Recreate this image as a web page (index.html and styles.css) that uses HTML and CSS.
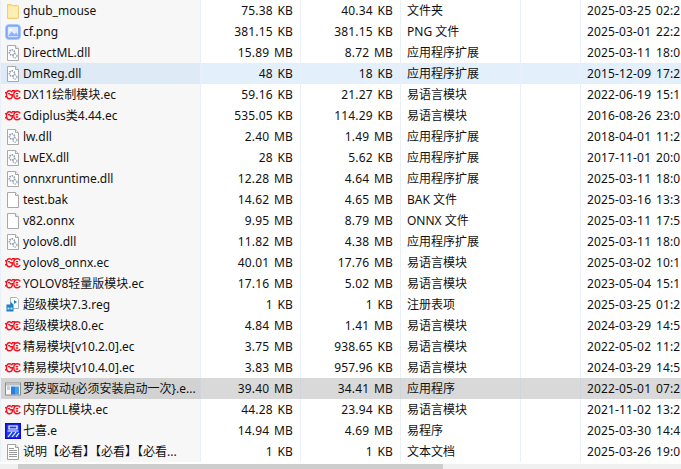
FILE: index.html
```html
<!DOCTYPE html>
<html lang="zh-CN">
<head>
<meta charset="utf-8">
<title>Files</title>
<link rel="stylesheet" href="styles.css">
</head>
<body>
<svg class="defs" width="0" height="0" aria-hidden="true">
  <symbol id="i-folder" viewBox="0 0 16 16"><path d="M2.500 1.500h4l1 1h5a1 1 0 0 1 1 1v11a1 1 0 0 1-1 1h-10z" fill="#fce596" stroke="#efcf74"/><path d="M3.500 4h9v10h-9z" fill="#fdeeb6"/></symbol>
  <symbol id="i-png" viewBox="0 0 17 17"><rect x="0.500" y="0.500" width="16" height="16" rx="4" fill="#7fa9f7" stroke="#aac8fa"/><rect x="3" y="3" width="11" height="11" rx="1" fill="#e2ecfe"/><path d="M3 13l4-5 3 3 2-2 2 3v1H3z" fill="#8db3f8"/><circle cx="6" cy="6" r="1.300" fill="#fff"/></symbol>
  <symbol id="i-dll" viewBox="0 0 16 16"><path d="M2.500 .5h8l3 3v12h-11z" fill="#fff" stroke="#a8a8a8"/><path d="M10.500 .5v3h3" fill="#eee" stroke="#a8a8a8"/><circle cx="7" cy="7.500" r="2.600" fill="none" stroke="#8e9aa6" stroke-width="1.600" stroke-dasharray="1.500 .8"/><circle cx="10" cy="11" r="2" fill="none" stroke="#9fb0c2" stroke-width="1.400" stroke-dasharray="1.300 .7"/></symbol>
  <symbol id="i-ec" viewBox="0 0 16 10"><g fill="none" stroke="#f2101c" stroke-width="1.400"><path d="M7.300 2.300C6.600 1.300 5.500.8 4.200.8 2.600.8 1.500 2.500 1.500 4.800S2.600 8.800 4.200 8.800c1.500 0 2.800-.9 3.100-2.400V4.700H4.500"/><path d="M15.300 2.300C14.600 1.300 13.500.8 12.200.8c-1.900 0-3.400 1.700-3.400 4s1.500 4 3.400 4c1.300 0 2.400-.6 3.100-1.600"/><path d="M3 3.600h2.200M10.800 3.600h2.400M10.800 6h2.400M0 2.500l2 1M0 7l2-1M7 .8h3"/></g></symbol>
  <symbol id="i-blank" viewBox="0 0 16 16"><path d="M2.500 .5h8l3 3v12h-11z" fill="#fff" stroke="#a8a8a8"/><path d="M10.500 .5v3h3" fill="#f0f0f0" stroke="#a8a8a8"/></symbol>
  <symbol id="i-reg" viewBox="0 0 16 16"><path d="M5.500 .5h6l2 2v9h-8z" fill="#fff" stroke="#a8b4c0"/><path d="M1.500 7.500h4v-3l3 3v7h-7z" fill="#1f7fc4"/><rect x="2.500" y="10.500" width="2" height="2" fill="#bfe2f8"/><rect x="5.500" y="10.500" width="2" height="2" fill="#bfe2f8"/><path d="M9 3l3 2-3 2z" fill="#1f7fc4"/></symbol>
  <symbol id="i-exe" viewBox="0 0 16 13"><rect x=".5" y=".5" width="15" height="12" fill="#f8f8f8" stroke="#8c8c8c"/><rect x="1" y="1" width="14" height="2" fill="#b9c0c8"/><rect x="6" y="4" width="4" height="8" fill="#2c7fd8"/><rect x="10" y="4" width="4" height="8" fill="#4aa0ec"/><rect x="2" y="4" width="3" height="1" fill="#9aa4ae"/><rect x="2" y="6" width="3" height="1" fill="#9aa4ae"/></symbol>
  <symbol id="i-e" viewBox="0 0 16 16"><rect x=".75" y=".75" width="14.500" height="14.500" fill="#1d3df0" stroke="#0b0bd8" stroke-width="1.500"/><path d="M4 3h8v3H4zM2.500 8h11M3 14l4-5M7 14l4-5M11 14l3-4" fill="none" stroke="#fff" stroke-width="1.200"/></symbol>
  <symbol id="i-txt" viewBox="0 0 16 16"><path d="M2.500 .5h8l3 3v12h-11z" fill="#fff" stroke="#a0a0a0"/><path d="M10.500 .5v3h3" fill="#eee" stroke="#a0a0a0"/><path d="M4 4.500h5M4 6.500h8M4 8.500h8M4 10.500h8M4 12.500h8" stroke="#9a9a9a"/></symbol>
</svg>
<main class="list">
  <div class="row"><div class="c name"><svg class="ico"><use href="#i-folder"/></svg><span>ghub_mouse</span></div><div class="c num">75.38 KB</div><div class="c num">40.34 KB</div><div class="c type">文件夹</div><div class="c gap"></div><div class="c date">2025-03-25 02:2</div></div>
  <div class="row"><div class="c name"><svg class="ico"><use href="#i-png"/></svg><span>cf.png</span></div><div class="c num">381.15 KB</div><div class="c num">381.15 KB</div><div class="c type">PNG 文件</div><div class="c gap"></div><div class="c date">2025-03-01 22:2</div></div>
  <div class="row"><div class="c name"><svg class="ico"><use href="#i-dll"/></svg><span>DirectML.dll</span></div><div class="c num">15.89 MB</div><div class="c num">8.72 MB</div><div class="c type">应用程序扩展</div><div class="c gap"></div><div class="c date">2025-03-11 18:0</div></div>
  <div class="row hover"><div class="c name"><svg class="ico"><use href="#i-dll"/></svg><span>DmReg.dll</span></div><div class="c num">48 KB</div><div class="c num">18 KB</div><div class="c type">应用程序扩展</div><div class="c gap"></div><div class="c date">2015-12-09 17:2</div></div>
  <div class="row"><div class="c name"><svg class="ico"><use href="#i-ec"/></svg><span>DX11绘制模块.ec</span></div><div class="c num">59.16 KB</div><div class="c num">21.27 KB</div><div class="c type">易语言模块</div><div class="c gap"></div><div class="c date">2022-06-19 15:1</div></div>
  <div class="row"><div class="c name"><svg class="ico"><use href="#i-ec"/></svg><span>Gdiplus类4.44.ec</span></div><div class="c num">535.05 KB</div><div class="c num">114.29 KB</div><div class="c type">易语言模块</div><div class="c gap"></div><div class="c date">2016-08-26 23:0</div></div>
  <div class="row"><div class="c name"><svg class="ico"><use href="#i-dll"/></svg><span>lw.dll</span></div><div class="c num">2.40 MB</div><div class="c num">1.49 MB</div><div class="c type">应用程序扩展</div><div class="c gap"></div><div class="c date">2018-04-01 11:2</div></div>
  <div class="row"><div class="c name"><svg class="ico"><use href="#i-dll"/></svg><span>LwEX.dll</span></div><div class="c num">28 KB</div><div class="c num">5.62 KB</div><div class="c type">应用程序扩展</div><div class="c gap"></div><div class="c date">2017-11-01 20:0</div></div>
  <div class="row"><div class="c name"><svg class="ico"><use href="#i-dll"/></svg><span>onnxruntime.dll</span></div><div class="c num">12.28 MB</div><div class="c num">4.64 MB</div><div class="c type">应用程序扩展</div><div class="c gap"></div><div class="c date">2025-03-11 18:0</div></div>
  <div class="row"><div class="c name"><svg class="ico"><use href="#i-blank"/></svg><span>test.bak</span></div><div class="c num">14.62 MB</div><div class="c num">4.65 MB</div><div class="c type">BAK 文件</div><div class="c gap"></div><div class="c date">2025-03-16 13:3</div></div>
  <div class="row"><div class="c name"><svg class="ico"><use href="#i-blank"/></svg><span>v82.onnx</span></div><div class="c num">9.95 MB</div><div class="c num">8.79 MB</div><div class="c type">ONNX 文件</div><div class="c gap"></div><div class="c date">2025-03-11 17:5</div></div>
  <div class="row"><div class="c name"><svg class="ico"><use href="#i-dll"/></svg><span>yolov8.dll</span></div><div class="c num">11.82 MB</div><div class="c num">4.38 MB</div><div class="c type">应用程序扩展</div><div class="c gap"></div><div class="c date">2025-03-11 18:0</div></div>
  <div class="row"><div class="c name"><svg class="ico"><use href="#i-ec"/></svg><span>yolov8_onnx.ec</span></div><div class="c num">40.01 MB</div><div class="c num">17.76 MB</div><div class="c type">易语言模块</div><div class="c gap"></div><div class="c date">2025-03-02 10:1</div></div>
  <div class="row"><div class="c name"><svg class="ico"><use href="#i-ec"/></svg><span>YOLOV8轻量版模块.ec</span></div><div class="c num">17.16 MB</div><div class="c num">5.02 MB</div><div class="c type">易语言模块</div><div class="c gap"></div><div class="c date">2023-05-04 15:1</div></div>
  <div class="row"><div class="c name"><svg class="ico"><use href="#i-reg"/></svg><span>超级模块7.3.reg</span></div><div class="c num">1 KB</div><div class="c num">1 KB</div><div class="c type">注册表项</div><div class="c gap"></div><div class="c date">2025-03-25 01:2</div></div>
  <div class="row"><div class="c name"><svg class="ico"><use href="#i-ec"/></svg><span>超级模块8.0.ec</span></div><div class="c num">4.84 MB</div><div class="c num">1.41 MB</div><div class="c type">易语言模块</div><div class="c gap"></div><div class="c date">2024-03-29 14:5</div></div>
  <div class="row"><div class="c name"><svg class="ico"><use href="#i-ec"/></svg><span>精易模块[v10.2.0].ec</span></div><div class="c num">3.75 MB</div><div class="c num">938.65 KB</div><div class="c type">易语言模块</div><div class="c gap"></div><div class="c date">2022-05-02 11:2</div></div>
  <div class="row"><div class="c name"><svg class="ico"><use href="#i-ec"/></svg><span>精易模块[v10.4.0].ec</span></div><div class="c num">3.83 MB</div><div class="c num">957.96 KB</div><div class="c type">易语言模块</div><div class="c gap"></div><div class="c date">2024-03-29 14:5</div></div>
  <div class="row selected"><div class="c name"><svg class="ico"><use href="#i-exe"/></svg><span>罗技驱动{必须安装启动一次}.e...</span></div><div class="c num">39.40 MB</div><div class="c num">34.41 MB</div><div class="c type">应用程序</div><div class="c gap"></div><div class="c date">2022-05-01 07:2</div></div>
  <div class="row"><div class="c name"><svg class="ico"><use href="#i-ec"/></svg><span>内存DLL模块.ec</span></div><div class="c num">44.28 KB</div><div class="c num">23.94 KB</div><div class="c type">易语言模块</div><div class="c gap"></div><div class="c date">2021-11-02 13:2</div></div>
  <div class="row"><div class="c name"><svg class="ico"><use href="#i-e"/></svg><span>七喜.e</span></div><div class="c num">14.94 MB</div><div class="c num">4.69 MB</div><div class="c type">易程序</div><div class="c gap"></div><div class="c date">2025-03-30 14:4</div></div>
  <div class="row"><div class="c name"><svg class="ico"><use href="#i-txt"/></svg><span>说明【必看】【必看】【必看...</span></div><div class="c num">1 KB</div><div class="c num">1 KB</div><div class="c type">文本文档</div><div class="c gap"></div><div class="c date">2025-03-26 19:0</div></div>
</main>
<div class="hscroll"><div class="thumb"></div></div>
</body>
</html>
```
FILE: styles.css
```css
* { box-sizing: border-box; }
html, body { margin: 0; height: 100%; overflow: hidden; background: #fff; }
body {
  width: 681px; height: 469px;
  display: flex; flex-direction: column;
  font: 12px/21px "Noto Sans", "Noto Sans CJK SC", sans-serif;
  color: #111;
}
.defs { position: absolute; }
.list { height: 464px; overflow: hidden; }
.row {
  display: grid;
  grid-template-columns: 201px 100px 100px 120px 60px 100px;
  height: 21px;
  white-space: nowrap;
}
.c { height: 21px; border-right: 1px solid #e9f0fa; overflow: hidden; }
.name {
  display: flex; align-items: center;
  background: #f7f7f7;
  border-left: 1px solid #e9f0fa;
}
.ico { width: 16px; height: 16px; margin-left: 4px; margin-right: 2px; flex: none; }
.num { text-align: right; padding-right: 7px; word-spacing: 1.500px; letter-spacing: .15px; }
.type { padding-left: 6px; }
.date { padding-left: 6px; border-right: 0; overflow: visible; word-spacing: 1.500px; letter-spacing: .15px; }
.hover .c { background: #e3f0fc; }
.hover .name { background: #deebf6; }
.selected .c { background: #d9d9d9; border-right-color: #cfd5dc; }
.selected .name { background: #d2d2d2; }
.hscroll { height: 5px; background: #f0f0f0; padding-left: 18px; }
.thumb { width: 425px; height: 5px; background: #cdcdcd; }
```
